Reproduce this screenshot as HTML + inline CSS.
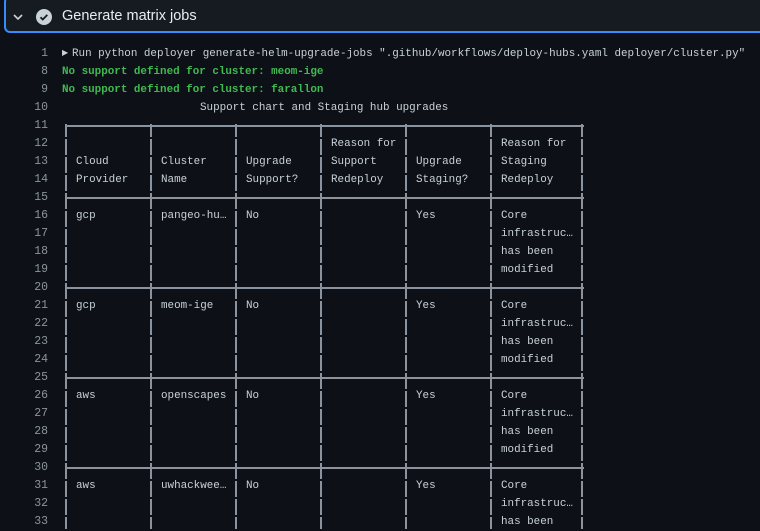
<!DOCTYPE html>
<html><head><meta charset="utf-8"><style>
body{margin:0;width:760px;height:529px;background:#0d1117;overflow:hidden;position:relative;font-family:"Liberation Mono",monospace;font-size:10.9px;color:#c9d1d9}
.hdr{position:absolute;left:4px;top:-4px;width:770px;height:34px;background:#161b22;border:1px solid #30363d;border-bottom:2px solid #388bfd;border-left:2px solid #388bfd;border-radius:6px}
.ttl{position:absolute;left:62px;top:8px;font-family:"Liberation Sans",sans-serif;font-size:14.5px;color:#e6edf3}
.ln{position:absolute;left:0;width:48px;text-align:right;color:#8b949e;height:18px;line-height:18px;font-size:11.5px;margin-top:2px}
.t{position:absolute;height:18px;line-height:18px;white-space:pre;margin-top:2px}
.g{color:#3fb950;font-weight:bold}
.v{position:absolute;width:2px;top:124px;bottom:0;background:repeating-linear-gradient(#8b949e 0 16px,transparent 16px 18px);background-position:0 -3px}
.h{position:absolute;height:2px;background:#8b949e;left:65px;width:519px}
</style></head><body>
<div class="hdr"></div>
<svg style="position:absolute;left:12px;top:11px" width="12" height="12" viewBox="0 0 12 12"><path d="M2 4l4 4 4-4" stroke="#c9d1d9" stroke-width="1.6" fill="none"/></svg>
<svg style="position:absolute;left:36px;top:9px" width="16" height="16" viewBox="0 0 16 16"><circle cx="8" cy="8" r="8" fill="#c9d1d9"/><path d="M4.5 8.2l2.3 2.3 4.5-4.6" stroke="#161b22" stroke-width="1.8" fill="none"/></svg>
<div class="ttl">Generate matrix jobs</div>
<div id="c"></div>
<div class="h" style="top:125px"></div><div class="h" style="top:197px"></div><div class="h" style="top:287px"></div><div class="h" style="top:377px"></div><div class="h" style="top:467px"></div>
<div class="v" style="left:65px"></div><div class="v" style="left:150px"></div><div class="v" style="left:235px"></div><div class="v" style="left:320px"></div><div class="v" style="left:405px"></div><div class="v" style="left:490px"></div><div class="v" style="left:581px"></div>
<script>
var nums=[1,8,9,10,11,12,13,14,15,16,17,18,19,20,21,22,23,24,25,26,27,28,29,30,31,32,33];
var L=[75,160,245,330,415,500];
var cells={12:[[3,"Reason for"],[5,"Reason for"]],13:[[0,"Cloud"],[1,"Cluster"],[2,"Upgrade"],[3,"Support"],[4,"Upgrade"],[5,"Staging"]],14:[[0,"Provider"],[1,"Name"],[2,"Support?"],[3,"Redeploy"],[4,"Staging?"],[5,"Redeploy"]]};
var rows=[[16,"gcp","pangeo-hu…"],[21,"gcp","meom-ige"],[26,"aws","openscapes"],[31,"aws","uwhackwee…"]];
rows.forEach(function(r){var n=r[0];cells[n]=[[0,r[1]],[1,r[2]],[2,"No"],[4,"Yes"],[5,"Core"]];cells[n+1]=[[5,"infrastruc…"]];cells[n+2]=[[5,"has been"]];cells[n+3]=[[5,"modified"]];});
var h="";
nums.forEach(function(n,i){var y=43+i*18;h+='<div class="ln" style="top:'+y+'px">'+n+'</div>';
if(n==1)h+='<div class="t" style="top:'+y+'px;left:62px"><span style="font-size:8px;position:relative;top:-1px;display:inline-block;width:10px">▶</span>Run python deployer generate-helm-upgrade-jobs ".github/workflows/deploy-hubs.yaml deployer/cluster.py"</div>';
if(n==8)h+='<div class="t g" style="top:'+y+'px;left:62px">No support defined for cluster: meom-ige</div>';
if(n==9)h+='<div class="t g" style="top:'+y+'px;left:62px">No support defined for cluster: farallon</div>';
if(n==10)h+='<div class="t" style="top:'+y+'px;left:200px">Support chart and Staging hub upgrades</div>';
(cells[n]||[]).forEach(function(c){h+='<div class="t" style="top:'+y+'px;left:'+(L[c[0]]+1)+'px">'+c[1]+'</div>';});});
document.getElementById("c").innerHTML=h;
</script>
</body></html>
